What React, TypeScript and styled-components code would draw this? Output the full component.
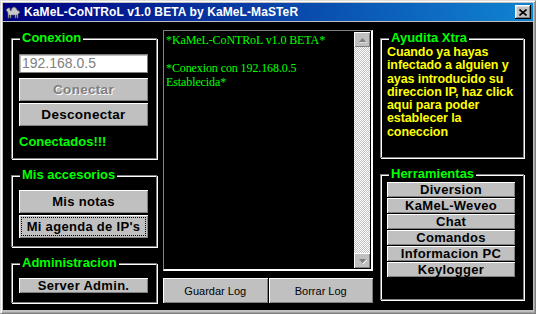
import React from "react";
import styled, { createGlobalStyle } from "styled-components";

const Global = createGlobalStyle`
  html, body { margin: 0; padding: 0; background: #c0c0c0; }
  body {
    width: 536px; height: 314px; overflow: hidden;
    font-family: "Liberation Sans", Arial, sans-serif;
  }
`;

const Win = styled.div`
  width: 536px;
  height: 314px;
  box-sizing: border-box;
  background: #c0c0c0;
  border: 1px solid #dfdfdf;
  border-right-color: #808080;
  border-bottom-color: #808080;
  box-shadow: inset 1px 1px #ffffff, inset -1px -1px #a0a0a0;
  padding: 2px 2px 3px 2px;
  display: flex;
  flex-direction: column;
`;

const TitleBar = styled.div`
  height: 18px;
  flex: none;
  display: flex;
  align-items: center;
  padding: 0 2px 0 2px;
  background: linear-gradient(to right, #000080, #1084d0);
  color: #fff;
  font-weight: bold;
  font-size: 12px;
  letter-spacing: 0.1px;
`;

const TitleText = styled.span`
  flex: 1;
  margin-left: 3px;
  white-space: nowrap;
`;

const CloseBtn = styled.div`
  width: 16px;
  height: 14px;
  box-sizing: border-box;
  background: #c0c0c0;
  box-shadow: inset -1px -1px #000, inset 1px 1px #fff, inset -2px -2px #808080, inset 2px 2px #dfdfdf;
  display: flex;
  align-items: center;
  justify-content: center;
`;

const Client = styled.div`
  flex: 1;
  margin-top: 1px;
  background: #000;
  display: flex;
  padding-left: 8px;
`;

const Column = styled.div<{ $w: number; $ml: number; $pt: number }>`
  width: ${(p) => p.$w}px;
  margin-left: ${(p) => p.$ml}px;
  padding-top: ${(p) => p.$pt}px;
  display: flex;
  flex-direction: column;
  gap: 16px;
`;

const Frame = styled.div<{ $h: number; $pt: number; $pl: number }>`
  position: relative;
  box-sizing: border-box;
  height: ${(p) => p.$h}px;
  border: 1px solid #808080;
  box-shadow: 1px 1px 0 #ffffff, inset 1px 1px 0 #ffffff;
  padding: ${(p) => p.$pt}px 0 0 ${(p) => p.$pl}px;
  display: flex;
  flex-direction: column;
`;

const Legend = styled.span`
  position: absolute;
  top: -9px;
  left: 8px;
  padding: 0 2px;
  background: #000;
  color: #00ff00;
  font-weight: bold;
  font-size: 13px;
  line-height: 15px;
  white-space: nowrap;
`;

const TextBox = styled.div`
  width: 129px;
  height: 19px;
  box-sizing: border-box;
  background: #fff;
  border: 1px solid #808080;
  box-shadow: inset 1px 1px #c0c0c0;
  color: #808080;
  font-size: 14px;
  line-height: 17px;
  padding-left: 2px;
`;

const Button = styled.div<{ $h: number; $disabled?: boolean; $focused?: boolean; $w?: number; $fs?: number }>`
  width: ${(p) => p.$w ?? 129}px;
  height: ${(p) => p.$h}px;
  box-sizing: border-box;
  background: #c0c0c0;
  box-shadow: inset 1px 1px #ffffff, inset -1px -1px #808080;
  display: flex;
  align-items: center;
  justify-content: center;
  font-weight: bold;
  font-size: ${(p) => p.$fs ?? 13}px;
  letter-spacing: 0.3px;
  white-space: nowrap;
  color: ${(p) => (p.$disabled ? "#808080" : "#000")};
  text-shadow: ${(p) => (p.$disabled ? "1px 1px #ffffff" : "none")};
  outline: ${(p) => (p.$focused ? "1px dotted #000" : "none")};
  outline-offset: -3px;
`;

const Stack = styled.div<{ $gap: number; $mt?: number }>`
  display: flex;
  flex-direction: column;
  gap: ${(p) => p.$gap}px;
  margin-top: ${(p) => p.$mt ?? 0}px;
`;

const Status = styled.div`
  margin-top: 8px;
  color: #00ff00;
  font-weight: bold;
  font-size: 13px;
  line-height: 15px;
`;

const LogBox = styled.div`
  height: 241px;
  box-sizing: border-box;
  border-top: 1px solid #808080;
  border-left: 1px solid #808080;
  border-right: 2px solid #ffffff;
  border-bottom: 2px solid #ffffff;
  display: flex;
`;

const LogText = styled.div`
  flex: 1;
  padding: 2px 0 0 2px;
  color: #00ff00;
  font-family: "Liberation Serif", "Times New Roman", serif;
  font-size: 12px;
  line-height: 14px;
  letter-spacing: -0.1px;
  white-space: pre;
`;

const ScrollTrack = styled.div`
  width: 16px;
  margin: 1px 1px 1px 0;
  display: flex;
  flex-direction: column;
  justify-content: space-between;
  background: repeating-conic-gradient(#c0c0c0 0 25%, #ffffff 0 50%) 0 0 / 2px 2px;
`;

const ScrollBtn = styled.div`
  width: 16px;
  height: 15px;
  box-sizing: border-box;
  background: #c0c0c0;
  box-shadow: inset 1px 1px #ffffff, inset -1px -1px #808080;
  display: flex;
  align-items: center;
  justify-content: center;
`;

const LogButtons = styled.div`
  display: flex;
  margin-top: 7px;
  gap: 1px;
`;

const FlatButton = styled.div`
  flex: 1;
  height: 25px;
  box-sizing: border-box;
  background: #c0c0c0;
  box-shadow: inset 1px 1px #ffffff, inset -1px -1px #808080;
  display: flex;
  align-items: center;
  justify-content: center;
  font-size: 11px;
  color: #000;
`;

const HelpText = styled.div`
  color: #ffff00;
  font-weight: bold;
  font-size: 12.5px;
  line-height: 13.3px;
  letter-spacing: -0.1px;
  white-space: pre;
`;

const Camel = () => (
  <svg width="16" height="14" viewBox="0 0 16 14">
    <path
      d="M1 5 L3 3 L5 3 L5 5 L6 6 L7 3 L9 2 L11 3 L12 5 L14 6 L15 8 L14 8 L13 9 L13 13 L12 13 L12 10 L11 10 L11 13 L10 13 L10 10 L6 10 L6 13 L5 13 L5 10 L4 10 L4 13 L3 13 L3 8 L2 6 Z"
      fill="#c8c8c8"
      stroke="#606060"
      strokeWidth="0.6"
    />
  </svg>
);

const Arrow = ({ up }: { up: boolean }) => (
  <svg width="9" height="6" viewBox="0 0 9 6">
    <path d={up ? "M1 5 L4.5 1 L8 5 Z" : "M1 1 L4.5 5 L8 1 Z"} fill="#808080" />
    <path d={up ? "M2 6 L9 6" : "M5 6 L9 2"} stroke="#ffffff" strokeWidth="1" />
  </svg>
);

const logLines = "*KaMeL-CoNTRoL v1.0 BETA*\n\n*Conexion con 192.168.0.5\nEstablecida*";
const helpLines =
  "Cuando ya hayas\ninfectado a alguien y\nayas introducido su\ndireccion IP, haz click\naqui para poder\nestablecer la\nconeccion";
const tools = ["Diversion", "KaMeL-Weveo", "Chat", "Comandos", "Informacion PC", "Keylogger"];

export default function App() {
  return (
    <>
      <Global />
      <Win>
        <TitleBar>
          <Camel />
          <TitleText>KaMeL-CoNTRoL v1.0 BETA by KaMeL-MaSTeR</TitleText>
          <CloseBtn>
            <svg width="8" height="7" viewBox="0 0 8 7">
              <path d="M0.5 0.5 L7.5 6.5 M7.5 0.5 L0.5 6.5" stroke="#000" strokeWidth="1.6" />
            </svg>
          </CloseBtn>
        </TitleBar>
        <Client>
          <Column $w={146} $ml={0} $pt={16}>
            <Frame $h={121} $pt={15} $pl={7}>
              <Legend>Conexion</Legend>
              <TextBox>192.168.0.5</TextBox>
              <Stack $gap={2} $mt={5}>
                <Button $h={23} $fs={13.5} $disabled>Conectar</Button>
                <Button $h={23} $fs={13.5}>Desconectar</Button>
              </Stack>
              <Status>Conectados!!!</Status>
            </Frame>
            <Frame $h={72} $pt={14} $pl={7}>
              <Legend>Mis accesorios</Legend>
              <Stack $gap={2}>
                <Button $h={23}>Mis notas</Button>
                <Button $h={23} $focused>Mi agenda de IP's</Button>
              </Stack>
            </Frame>
            <Frame $h={40} $pt={14} $pl={7}>
              <Legend>Administracion</Legend>
              <Button $h={15}>Server Admin.</Button>
            </Frame>
          </Column>
          <Column $w={210} $ml={6} $pt={8}>
            <div>
              <LogBox>
                <LogText>{logLines}</LogText>
                <ScrollTrack>
                  <ScrollBtn>
                    <Arrow up />
                  </ScrollBtn>
                  <ScrollBtn>
                    <Arrow up={false} />
                  </ScrollBtn>
                </ScrollTrack>
              </LogBox>
              <LogButtons>
                <FlatButton>Guardar Log</FlatButton>
                <FlatButton>Borrar Log</FlatButton>
              </LogButtons>
            </div>
          </Column>
          <Column $w={144} $ml={7} $pt={16}>
            <Frame $h={120} $pt={7} $pl={6}>
              <Legend>Ayudita Xtra</Legend>
              <HelpText>{helpLines}</HelpText>
            </Frame>
            <Frame $h={126} $pt={7} $pl={6}>
              <Legend>Herramientas</Legend>
              <Stack $gap={1}>
                {tools.map((t) => (
                  <Button key={t} $h={15} $w={128}>
                    {t}
                  </Button>
                ))}
              </Stack>
            </Frame>
          </Column>
        </Client>
      </Win>
    </>
  );
}
